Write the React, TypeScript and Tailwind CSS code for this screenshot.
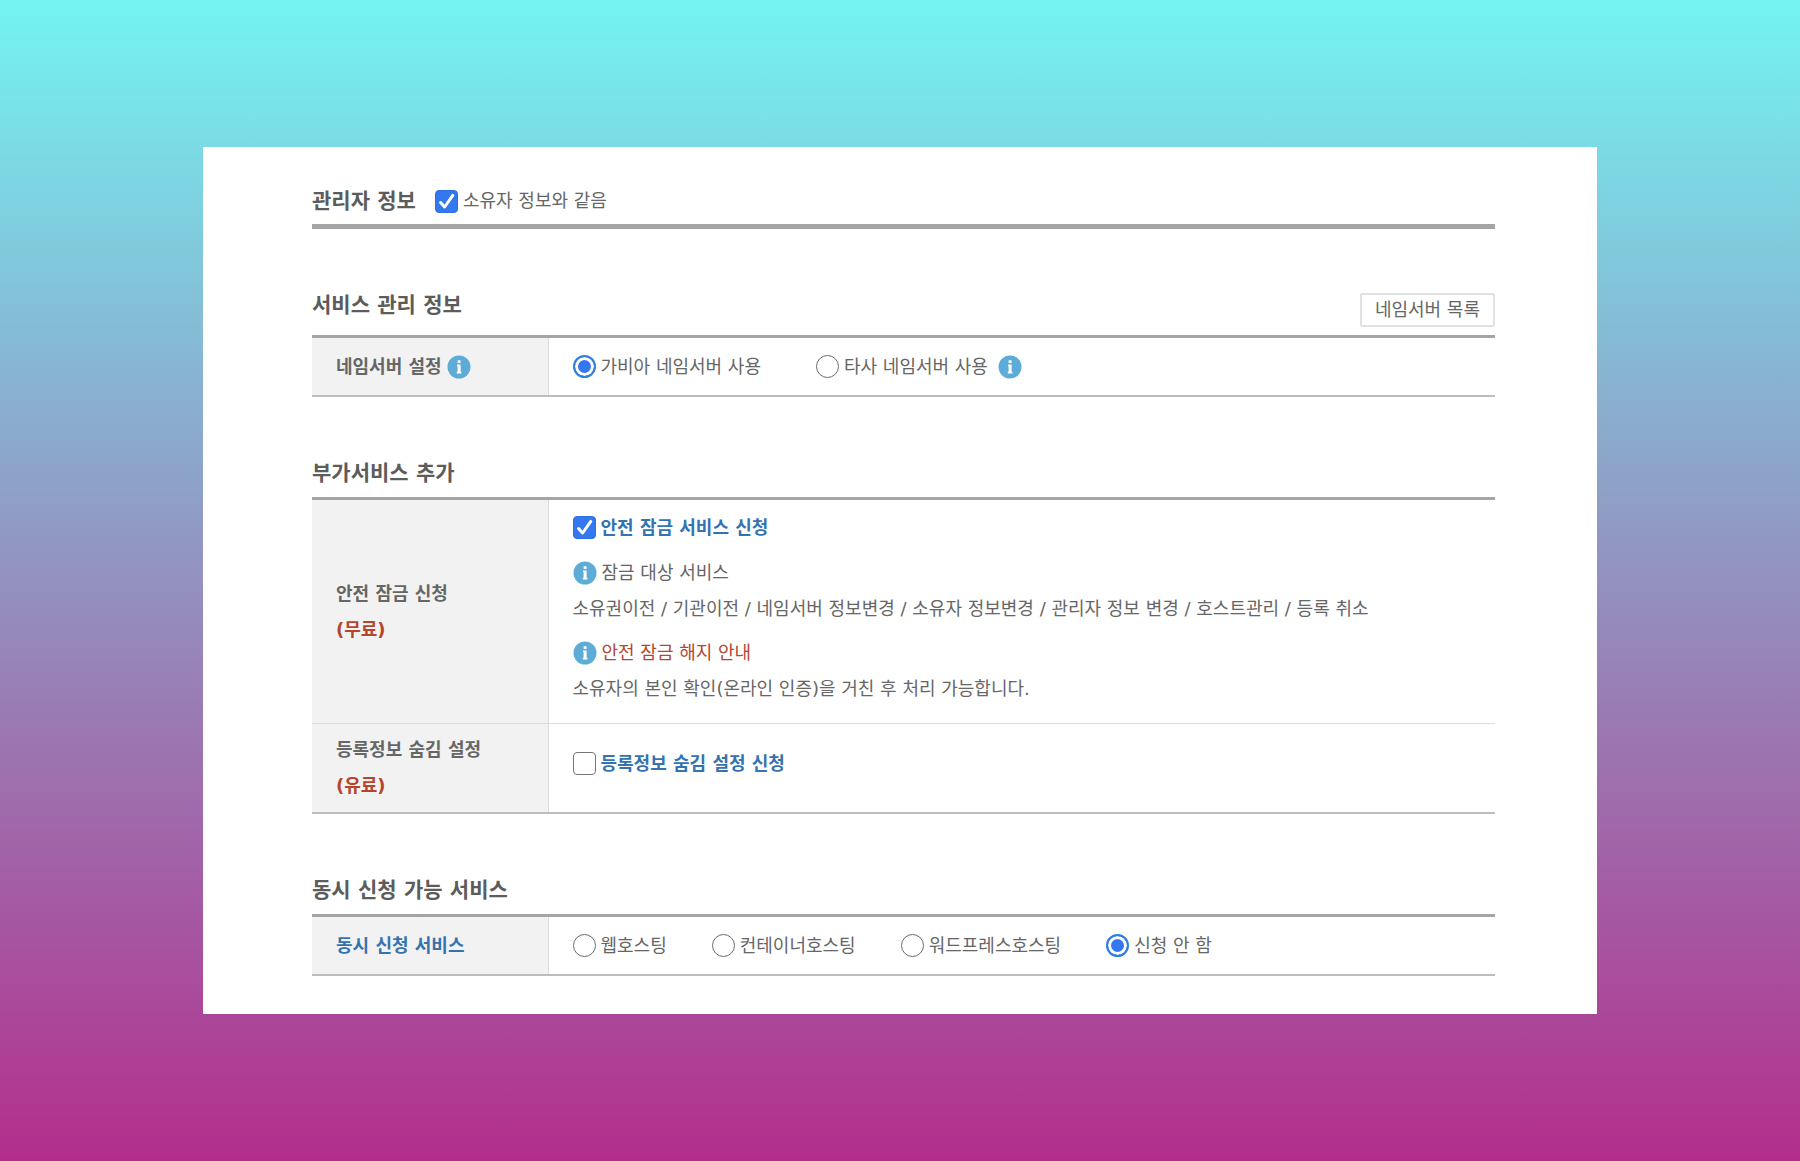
import { useState } from "react";
import type { ReactNode } from "react";
import clsx from "clsx";

const HOSTING_OPTIONS = [
  { value: "web", label: "웹호스팅" },
  { value: "container", label: "컨테이너호스팅" },
  { value: "wordpress", label: "워드프레스호스팅" },
  { value: "none", label: "신청 안 함" },
];

function InfoIcon() {
  return (
    <svg viewBox="0 0 24 24" className="size-6 shrink-0" aria-hidden="true">
      <circle cx="12" cy="12" r="11.5" fill="#5dacd8" />
      <rect x="10.6" y="5.2" width="3" height="2.8" rx="0.6" fill="#fff" />
      <path d="M10 9.6h3.6v7.2h0.8v1.6H9.8v-1.6h0.8v-5.6H10z" fill="#fff" />
    </svg>
  );
}

interface CheckboxProps {
  checked: boolean;
  onChange: (checked: boolean) => void;
  className?: string;
  children: ReactNode;
}

function Checkbox({ checked, onChange, className, children }: CheckboxProps) {
  return (
    <label className={clsx("inline-flex items-center gap-[5px]", className)}>
      <span className="relative flex">
        <input
          type="checkbox"
          checked={checked}
          onChange={(e) => onChange(e.target.checked)}
          className="peer size-[23px] appearance-none rounded-[4px] border border-[#767676] bg-white checked:border-[#2b6fe0] checked:bg-[#3478f0]"
        />
        <svg
          viewBox="0 0 23 23"
          className="pointer-events-none absolute inset-0 hidden size-[23px] peer-checked:block"
          aria-hidden="true"
        >
          <path
            d="M5.6 12.6l4 4.4 8.2-11.6"
            fill="none"
            stroke="#fff"
            strokeWidth="3"
            strokeLinecap="round"
            strokeLinejoin="round"
          />
        </svg>
      </span>
      {children}
    </label>
  );
}

interface RadioProps {
  name: string;
  checked: boolean;
  onChange: () => void;
  children: ReactNode;
}

function Radio({ name, checked, onChange, children }: RadioProps) {
  return (
    <label className="inline-flex items-center gap-[5px]">
      <input
        type="radio"
        name={name}
        checked={checked}
        onChange={onChange}
        className="size-[23px] appearance-none rounded-full border border-[#6b6b6b] bg-white checked:border-2 checked:border-[#2f7fe0] checked:bg-[#3478f0] checked:shadow-[inset_0_0_0_3px_#fff]"
      />
      {children}
    </label>
  );
}

function FormTable({ children }: { children: ReactNode }) {
  return (
    <table className="w-full border-collapse border-t-[3px] border-b-2 border-t-[#a5a5a5] border-b-[#bdbdbd] text-left">
      <tbody>{children}</tbody>
    </table>
  );
}

function RowHeader({ children }: { children: ReactNode }) {
  return (
    <th
      scope="row"
      className="w-[236px] border-r border-[#dcdcdc] bg-[#f2f2f2] py-2 pl-6 align-middle font-bold"
    >
      {children}
    </th>
  );
}

export default function App() {
  const [sameAsOwner, setSameAsOwner] = useState(true);
  const [nameServer, setNameServer] = useState("gabia");
  const [safeLock, setSafeLock] = useState(true);
  const [hideInfo, setHideInfo] = useState(false);
  const [hosting, setHosting] = useState("none");

  return (
    <div className="flex min-h-screen items-center bg-linear-to-b/srgb from-[#73f4f2] to-[#b32e8c] px-[203px] font-['DejaVu_Sans','Noto_Sans_CJK_KR',sans-serif] text-[18px] leading-9 text-[#666]">
      <main className="w-full bg-white pt-9 pr-[102px] pb-[38px] pl-[109px]">
        {/* 관리자 정보 */}
        <section className="flex items-center gap-[19px] border-b-[5px] border-[#a5a5a5] pb-[5px]">
          <h2 className="text-[21px] font-bold text-[#5c5c5c]">관리자 정보</h2>
          <Checkbox checked={sameAsOwner} onChange={setSameAsOwner}>
            소유자 정보와 같음
          </Checkbox>
        </section>

        {/* 서비스 관리 정보 */}
        <section className="mt-[58px]">
          <div className="flex items-start justify-between">
            <h2 className="text-[21px] font-bold text-[#5c5c5c]">서비스 관리 정보</h2>
            <button
              type="button"
              className="mt-[6px] mb-2 h-[34px] rounded-[2px] border-2 border-[#e0e2e2] bg-white px-[13px] leading-7"
            >
              네임서버 목록
            </button>
          </div>
          <FormTable>
            <tr className="h-[59px]">
              <RowHeader>
                <span className="flex items-center gap-[5px]">
                  네임서버 설정
                  <InfoIcon />
                </span>
              </RowHeader>
              <td className="pl-6">
                <div className="flex items-center">
                  <Radio
                    name="nameServer"
                    checked={nameServer === "gabia"}
                    onChange={() => setNameServer("gabia")}
                  >
                    가비아 네임서버 사용
                  </Radio>
                  <span className="ml-[55px] flex items-center gap-[10px]">
                    <Radio
                      name="nameServer"
                      checked={nameServer === "other"}
                      onChange={() => setNameServer("other")}
                    >
                      타사 네임서버 사용
                    </Radio>
                    <InfoIcon />
                  </span>
                </div>
              </td>
            </tr>
          </FormTable>
        </section>

        {/* 부가서비스 추가 */}
        <section className="mt-[58px]">
          <h2 className="pb-[6px] text-[21px] font-bold text-[#5c5c5c]">부가서비스 추가</h2>
          <FormTable>
            <tr className="border-b border-[#dcdcdc]">
              <RowHeader>
                안전 잠금 신청
                <br />
                <span className="text-[#b5452f]">(무료)</span>
              </RowHeader>
              <td className="pt-[10px] pb-4 pl-6">
                <Checkbox
                  checked={safeLock}
                  onChange={setSafeLock}
                  className="flex font-bold text-[#3572b0]"
                >
                  안전 잠금 서비스 신청
                </Checkbox>
                <p className="mt-1 flex items-center gap-[5px]">
                  <InfoIcon />
                  잠금 대상 서비스
                </p>
                <p>
                  소유권이전 / 기관이전 / 네임서버 정보변경 / 소유자 정보변경 / 관리자 정보 변경 /
                  호스트관리 / 등록 취소
                </p>
                <p className="mt-2 flex items-center gap-[5px] text-[#b5452f]">
                  <InfoIcon />
                  안전 잠금 해지 안내
                </p>
                <p>소유자의 본인 확인(온라인 인증)을 거친 후 처리 가능합니다.</p>
              </td>
            </tr>
            <tr>
              <RowHeader>
                등록정보 숨김 설정
                <br />
                <span className="text-[#b5452f]">(유료)</span>
              </RowHeader>
              <td className="pb-1 pl-6">
                <Checkbox
                  checked={hideInfo}
                  onChange={setHideInfo}
                  className="flex font-bold text-[#3572b0]"
                >
                  등록정보 숨김 설정 신청
                </Checkbox>
              </td>
            </tr>
          </FormTable>
        </section>

        {/* 동시 신청 가능 서비스 */}
        <section className="mt-[58px]">
          <h2 className="pb-[6px] text-[21px] font-bold text-[#5c5c5c]">동시 신청 가능 서비스</h2>
          <FormTable>
            <tr className="h-[59px]">
              <RowHeader>
                <span className="text-[#3572b0]">동시 신청 서비스</span>
              </RowHeader>
              <td className="pl-6">
                <div className="flex items-center gap-[45px]">
                  {HOSTING_OPTIONS.map(({ value, label }) => (
                    <Radio
                      key={value}
                      name="hosting"
                      checked={hosting === value}
                      onChange={() => setHosting(value)}
                    >
                      {label}
                    </Radio>
                  ))}
                </div>
              </td>
            </tr>
          </FormTable>
        </section>
      </main>
    </div>
  );
}
